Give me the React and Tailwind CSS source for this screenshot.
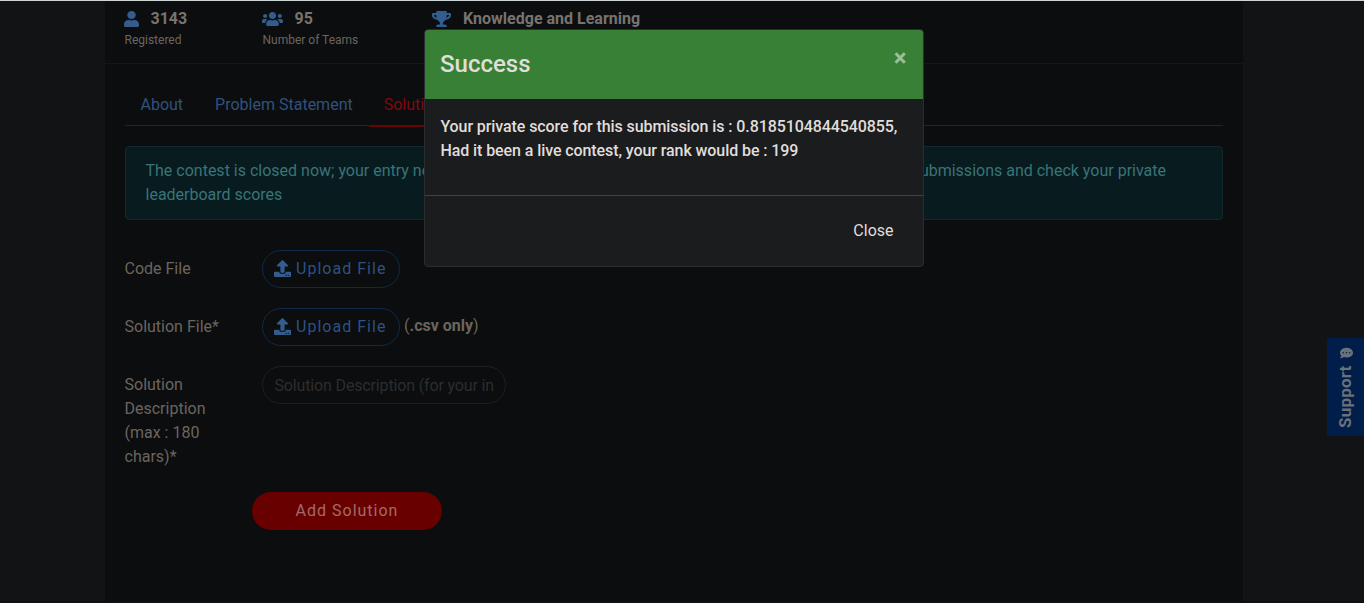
import { FaUser, FaUsers, FaTrophy, FaUpload, FaCommentDots } from "react-icons/fa";

const stats = [
  { Icon: FaUser, size: "w-[15px]", value: "3143", label: "Registered", col: "w-[138px]", gap: "gap-[11px]" },
  { Icon: FaUsers, size: "w-[21px]", value: "95", label: "Number of Teams", col: "w-[170px]", gap: "gap-[11px]" },
  { Icon: FaTrophy, size: "w-[19px]", value: "Knowledge and Learning", label: "", col: "w-[300px]", gap: "gap-[11.5px]" },
];

function UploadButton() {
  return (
    <button type="button" className="flex h-[38px] w-[138px] items-center rounded-full border border-[#10294b] pl-[11px] tracking-[1.02px] text-[#2f5183]">
      <FaUpload className="mr-[5px] mb-[2px] h-[17px] w-[17px] text-[#345c8c]" />
      Upload File
    </button>
  );
}

function Row({ label, children }) {
  return (
    <div className="flex items-start">
      <div className="w-[137.5px] shrink-0 pt-[7px] pr-10 leading-6">{label}</div>
      {children}
    </div>
  );
}

function Modal() {
  return (
    <div className="absolute top-[28px] left-[424px] h-[238px] w-[500px] overflow-hidden rounded border border-[#2b2e30] bg-[#1b1c1e] text-[#e0deda]">
      <header className="flex h-[68.5px] justify-between bg-[#378035] pr-[16.5px] pl-[15px]">
        <h2 className="pt-4 text-2xl leading-9 font-medium">Success</h2>
        <button className="h-10 pt-[16px] text-[24px] leading-6 font-bold text-[#9bc09a]">×</button>
      </header>
      <div className="h-[97.5px] border-b border-[#404344] px-[15.4px] pt-[16.5px] leading-6 font-medium tracking-[-0.085px]">
        Your private score for this submission is : 0.8185104844540855,
        <br />
        Had it been a live contest, your rank would be : 199
      </div>
      <footer className="flex justify-end pt-[23px] pr-[29.5px] leading-6">
        <button>Close</button>
      </footer>
    </div>
  );
}

export default function App() {
  return (
    <div className="relative flex h-[603px] w-[1364px] justify-center overflow-hidden border-t border-b-2 border-t-[#cdd5d5] border-b-[#07101d] bg-[#111314] font-['Roboto',sans-serif] text-base text-[#6b655f]">
      <main className="mr-4 w-[1138px] bg-[#0b0d0e]">
        <section className="flex h-[63px] border-b border-[#141617] pt-[6px] pl-[19.5px]">
          {stats.map(({ Icon, size, value, label, col, gap }) => (
            <div key={value} className={col}>
              <div className={`flex h-[23px] items-center ${gap} font-bold text-[#77736f]`}>
                <Icon preserveAspectRatio="none" className={`${size} -ml-[0.5px] mr-[0.5px] h-4 shrink-0 text-[#345c8c]`} />
                {value}
              </div>
              <div className="text-xs leading-5">{label}</div>
            </div>
          ))}
        </section>
        <section className="pt-[20px] pr-[20px] pl-[19.5px]">
          <nav className="flex h-[42px] border-b border-[#222526] text-[#30527f]">
            <span className="px-4 pt-[9px] leading-6">About</span>
            <span className="px-4 pt-[9px] leading-6">Problem Statement</span>
            <span className="h-[43px] border-b-2 border-[#690306] px-[15px] pt-[9px] leading-6 text-[#82080e]">Solution</span>
          </nav>
          <div className="mt-5 flex h-[74px] justify-between rounded border border-[#12292d] bg-[#081b1f] px-5 pt-3 leading-6 text-[#397478]">
            <div>
              The contest is closed now; your entry not
              <br />
              leaderboard scores
            </div>
            <div className="pr-[36px]">submissions and check your private</div>
          </div>
          <form className="mt-[30px] flex flex-col gap-5">
            <Row label="Code File"><UploadButton /></Row>
            <Row label="Solution File*">
              <UploadButton />
              <span className="pt-[6px] pl-1 leading-6">(<b>.csv only</b>)</span>
            </Row>
            <Row label="Solution Description (max : 180 chars)*">
              <div className="h-[38px] w-[244px] rounded-full border border-[#1d1f20] pt-[7px] pl-[11.5px] leading-6 tracking-[-0.15px] whitespace-nowrap text-[#2c2e30]">
                Solution Description (for your in
              </div>
            </Row>
            <button type="button" className="mt-[3px] ml-[127.5px] h-[38px] w-[190px] rounded-full bg-[#690000] tracking-[1px] text-[#a06c68]">
              Add Solution
            </button>
          </form>
        </section>
      </main>
      <aside className="absolute top-[337px] right-0 flex h-[98px] w-[37px] rotate-180 items-center justify-end bg-[#001e49] pt-2 pb-[9px] text-[17px] font-bold tracking-[0.2px] text-[#6b717b] [writing-mode:vertical-rl]">
        <div className="flex h-full w-full items-center justify-between">
          <span>Support</span>
          <FaCommentDots preserveAspectRatio="none" className="mr-[3px] h-[12px] w-[13px] rotate-180" />
        </div>
      </aside>
      <Modal />
    </div>
  );
}
